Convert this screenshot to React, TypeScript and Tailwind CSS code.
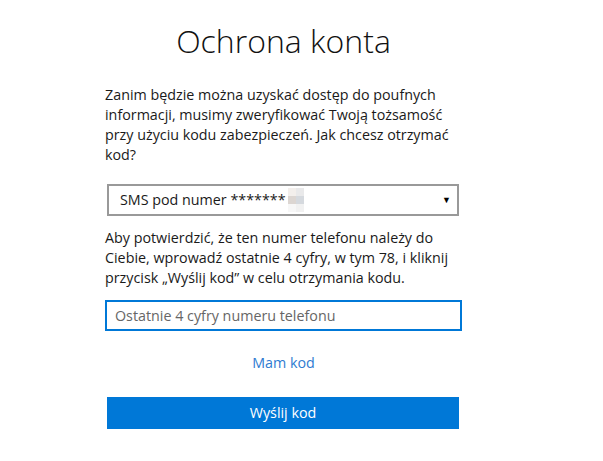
export default function App() {
  return (
    <div className="min-h-[461px] w-[603px] bg-white font-['Open_Sans',sans-serif] text-[#1a1a1a]">
      <div className="ml-[105px] flex w-[357px] flex-col pt-[19px]">
        <h1 className="text-center text-[32px] font-light leading-[44px] text-[#111]">Ochrona konta</h1>
        <p className="mt-[22px] text-[14.3px] leading-[20px] whitespace-nowrap">
          Zanim będzie można uzyskać dostęp do poufnych
          <br />
          informacji, musimy zweryfikować Twoją tożsamość
          <br />
          przy użyciu kodu zabezpieczeń. Jak chcesz otrzymać
          <br />
          kod?
        </p>
        <div className="mt-[19px] ml-[2px] flex h-[32px] w-[352px] items-center border-2 border-[#999] pl-[11px] pr-[6px]">
          <span className="text-[14.3px]">SMS pod numer *******</span>
          <span className="ml-[2px] grid h-[24px] w-[16px] grid-cols-2 grid-rows-3">
            <span className="bg-[#f3efec]" />
            <span className="bg-[#e9e9ea]" />
            <span className="bg-[#dcd6d2]" />
            <span className="bg-[#d5d9de]" />
            <span className="bg-[#f7f7f7]" />
            <span className="bg-[#f1f1f1]" />
          </span>
          <span className="ml-auto text-[9px] text-black">▼</span>
        </div>
        <p className="mt-[12px] text-[14.3px] leading-[20px] whitespace-nowrap">
          Aby potwierdzić, że ten numer telefonu należy do
          <br />
          Ciebie, wprowadź ostatnie 4 cyfry, w tym 78, i kliknij
          <br />
          przycisk „Wyślij kod” w celu otrzymania kodu.
        </p>
        <input
          className="mt-[12px] h-[31px] w-[357px] border-2 border-[#0078d7] px-[8px] text-[14.3px] outline-none placeholder:text-[#666]"
          placeholder="Ostatnie 4 cyfry numeru telefonu"
        />
        <a className="mt-[22px] text-center text-[14.3px] leading-[20px] text-[#2e7bd1]">Mam kod</a>
        <button className="mt-[24px] ml-[2px] h-[32px] w-[352px] bg-[#0078d7] text-[14.3px] text-white">Wyślij kod</button>
      </div>
    </div>
  );
}
